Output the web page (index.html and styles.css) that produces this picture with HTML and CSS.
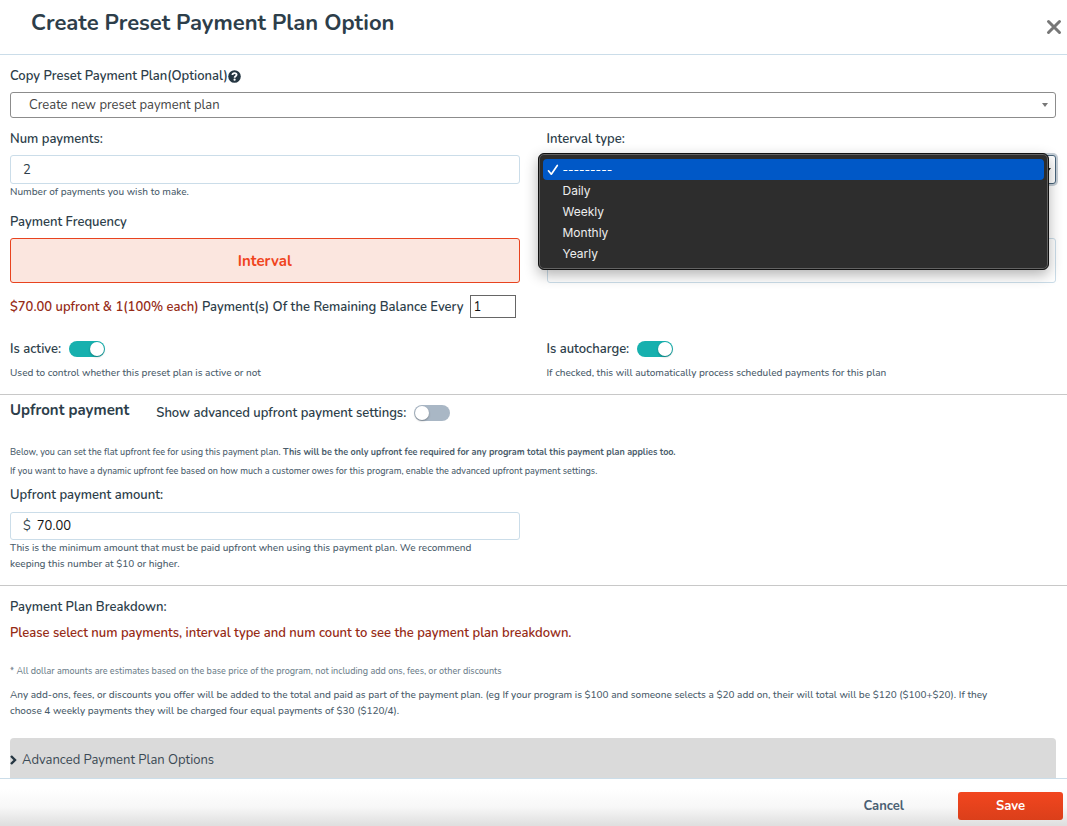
FILE: index.html
```html
<!DOCTYPE html>
<html lang="en">
<head>
    <meta charset="UTF-8">
    <meta name="viewport" content="width=device-width, initial-scale=1.0">
    <title>Create Preset Payment Plan Option</title>
    <link rel="stylesheet" href="styles.css">
</head>
<body>
    <form class="modal">
        <header class="modal-header">
            <h1>Create Preset Payment Plan Option</h1>
            <button type="button" class="close-button" aria-label="Close">
                <svg width="16" height="16" viewBox="0 0 16 16"><path d="M2.500 2.500L13.500 13.500M13.500 2.500L2.500 13.500" stroke="#777" stroke-width="3" stroke-linecap="round"/></svg>
            </button>
        </header>

        <div class="modal-body">
            <!-- Plan setup -->
            <section class="section">
                <div class="label-row">
                    <label for="copyPlan">Copy Preset Payment Plan(Optional)</label>
                    <svg class="help-icon" width="13" height="13" viewBox="0 0 13 13">
                        <circle cx="6.500" cy="6.500" r="6.300" fill="#253642"/>
                        <path d="M4.400 5C4.500 3.700 5.400 3.100 6.500 3.100C7.700 3.100 8.600 3.800 8.600 4.800C8.600 6.200 6.600 6.200 6.600 7.700" fill="none" stroke="#fff" stroke-width="1.800"/>
                        <circle cx="6.600" cy="9.700" r="1.100" fill="#fff"/>
                    </svg>
                </div>
                <select id="copyPlan" class="copy-select">
                    <option>Create new preset payment plan</option>
                </select>

                <div class="columns">
                    <div class="field">
                        <label for="numPayments">Num payments:</label>
                        <input type="text" id="numPayments" class="text-input" value="2">
                        <p class="help">Number of payments you wish to make.</p>
                    </div>
                    <div class="field">
                        <label for="intervalType">Interval type:</label>
                        <div class="interval">
                            <select id="intervalType" class="interval-select">
                                <option>---------</option>
                                <option>Daily</option>
                                <option>Weekly</option>
                                <option>Monthly</option>
                                <option>Yearly</option>
                            </select>
                            <ul class="menu" role="listbox" aria-label="Interval type">
                                <li class="menu-item selected" role="option" aria-selected="true">
                                    <svg class="check" width="12" height="12" viewBox="0 0 12 12"><path d="M1.500 6.800L4.300 10.200L10.300 1.500" fill="none" stroke="#fff" stroke-width="1.700" stroke-linecap="round" stroke-linejoin="round"/></svg>
                                    ---------
                                </li>
                                <li class="menu-item" role="option">Daily</li>
                                <li class="menu-item" role="option">Weekly</li>
                                <li class="menu-item" role="option">Monthly</li>
                                <li class="menu-item" role="option">Yearly</li>
                            </ul>
                        </div>
                    </div>
                </div>

                <div class="columns frequency">
                    <div class="field">
                        <span class="label">Payment Frequency</span>
                        <button type="button" class="frequency-button active">Interval</button>
                    </div>
                    <div class="field field-end">
                        <button type="button" class="frequency-button" aria-label="Other frequency"></button>
                    </div>
                </div>

                <div class="every-row">
                    <label for="every"><span class="red">$70.00 upfront &amp; 1(100% each)</span> Payment(s) Of the Remaining Balance Every</label>
                    <input type="text" id="every" class="every-input" value="1">
                </div>

                <div class="columns toggles">
                    <div>
                        <div class="toggle-row">
                            <label for="isActive">Is active:</label>
                            <input type="checkbox" id="isActive" class="toggle" checked>
                        </div>
                        <p class="help">Used to control whether this preset plan is active or not</p>
                    </div>
                    <div>
                        <div class="toggle-row">
                            <label for="isAutocharge">Is autocharge:</label>
                            <input type="checkbox" id="isAutocharge" class="toggle" checked>
                        </div>
                        <p class="help">If checked, this will automatically process scheduled payments for this plan</p>
                    </div>
                </div>
            </section>

            <!-- Upfront payment -->
            <section class="section upfront">
                <div class="upfront-header">
                    <h2>Upfront payment</h2>
                    <div class="toggle-row">
                        <label for="advancedUpfront">Show advanced upfront payment settings:</label>
                        <input type="checkbox" id="advancedUpfront" class="toggle">
                    </div>
                </div>
                <p class="note">Below, you can set the flat upfront fee for using this payment plan. <strong>This will be the only upfront fee required for any program total this payment plan applies too.</strong></p>
                <p class="note">If you want to have a dynamic upfront fee based on how much a customer owes for this program, enable the advanced upfront payment settings.</p>
                <div class="columns amount">
                    <div class="field">
                        <label for="upfrontAmount">Upfront payment amount:</label>
                        <div class="money-input">
                            <span>$</span>
                            <input type="text" id="upfrontAmount" value="70.00">
                        </div>
                        <p class="help">This is the minimum amount that must be paid upfront when using this payment plan. We recommend keeping this number at $10 or higher.</p>
                    </div>
                </div>
            </section>

            <!-- Breakdown -->
            <section class="section breakdown">
                <p class="label">Payment Plan Breakdown:</p>
                <p class="label red warning">Please select num payments, interval type and num count to see the payment plan breakdown.</p>
                <p class="note estimate">* All dollar amounts are estimates based on the base price of the program, not including add ons, fees, or other discounts</p>
                <p class="help">Any add-ons, fees, or discounts you offer will be added to the total and paid as part of the payment plan. (eg If your program is $100 and someone selects a $20 add on, their will total will be $120 ($100+$20). If they choose 4 weekly payments they will be charged four equal payments of $30 ($120/4).</p>
                <button type="button" class="advanced-button">
                    <svg width="7" height="10" viewBox="0 0 7 10"><path d="M1 1L5 5L1 9" fill="none" stroke="#253642" stroke-width="2.400"/></svg>
                    Advanced Payment Plan Options
                </button>
            </section>
        </div>

        <footer class="modal-footer">
            <button type="button" class="cancel-button">Cancel</button>
            <button type="submit" class="save-button">Save</button>
        </footer>
    </form>
</body>
</html>
```

FILE: styles.css
```css
* {
    box-sizing: border-box;
}
body {
    margin: 0;
    background: #fff;
    color: #2d3e4a;
    font-family: Nunito, "Noto Sans", sans-serif;
    font-size: 13px;
    line-height: 20px;
}
h1, h2, p, ul {
    margin: 0;
    padding: 0;
}
input, select, button {
    font-family: inherit;
    font-size: 13px;
    margin: 0;
}
button {
    cursor: pointer;
}
.modal {
    display: flex;
    flex-direction: column;
    height: 100vh;
}
/* Header */
.modal-header {
    display: flex;
    justify-content: space-between;
    align-items: flex-start;
    padding: 8px 5px 16px 31px;
    border-bottom: 1px solid #cbdde9;
}
.modal-header h1 {
    font-size: 22px;
    font-weight: 700;
    line-height: 30px;
}
.close-button {
    display: flex;
    padding: 0;
    margin-top: 11px;
    border: none;
    background: none;
}
/* Scrolling content */
.modal-body {
    flex: 1;
    min-height: 0;
    overflow-y: auto;
    scrollbar-width: none;
}
.section {
    padding: 11px 11px 13px 10px;
    border-bottom: 1px solid #c8c8c8;
}
label, .label {
    display: block;
    font-weight: 600;
}
.red {
    color: #962b16;
}
.help {
    font-size: 10px;
    font-weight: 500;
    line-height: 16px;
    color: #4a5c6b;
}
.note {
    font-size: 9px;
    font-weight: 500;
    line-height: 16px;
    color: #4a5c6b;
}
.columns {
    display: grid;
    grid-template-columns: 1fr 1fr;
    column-gap: 27px;
}
.field label, .field .label {
    margin-bottom: 6px;
}
.label-row {
    display: flex;
    align-items: center;
    margin-bottom: 6px;
}
.copy-select {
    display: block;
    width: 100%;
    height: 26px;
    margin-bottom: 11px;
    padding: 0 18px;
    border: 1px solid #8c8c8c;
    border-radius: 3px;
    color: #444;
    appearance: none;
    background: #fff url("data:image/svg+xml,%3Csvg xmlns='http://www.w3.org/2000/svg' width='6' height='4'%3E%3Cpath d='M0 0h6L3 4z' fill='%23777'/%3E%3C/svg%3E") no-repeat right 7px center;
}
.text-input {
    display: block;
    width: 100%;
    height: 29px;
    padding: 0 12px;
    border: 1px solid #cbdde9;
    border-radius: 3px;
    color: #2d3e4a;
}
/* Interval dropdown */
.interval {
    position: relative;
}
.interval-select {
    display: block;
    width: 100%;
    height: 29px;
    padding: 0 12px;
    border: 1px solid #48647a;
    border-radius: 3px;
    box-shadow: 0 0 0 2px #c5ced6;
    appearance: none;
    background: #fff url("data:image/svg+xml,%3Csvg xmlns='http://www.w3.org/2000/svg' width='6' height='4'%3E%3Cpath d='M0 0h6L3 4z' fill='%23222'/%3E%3C/svg%3E") no-repeat right 4px center;
}
.menu {
    position: absolute;
    z-index: 1;
    top: -2px;
    left: -9px;
    right: 7px;
    padding: 5px 4px;
    list-style: none;
    background: #2d2d2d;
    border: 1px solid #111;
    border-radius: 6px;
    box-shadow: inset 0 0 0 1px #636363, 0 5px 14px rgba(0, 0, 0, 0.3);
    color: #eee;
    font-family: Inter, "Liberation Sans", sans-serif;
    font-size: 12px;
}
.menu-item {
    position: relative;
    padding-left: 20px;
    line-height: 21px;
    border-radius: 4px;
}
.menu-item.selected {
    background: #0058c7;
    color: #fff;
}
.check {
    position: absolute;
    left: 4px;
    top: 5px;
}
/* Payment frequency */
.frequency {
    margin-top: 12px;
}
.field-end {
    display: flex;
    align-items: flex-end;
}
.frequency-button {
    display: block;
    width: 100%;
    height: 45px;
    border: 1px solid #cbdde9;
    border-radius: 3px;
    background: #fff;
}
.frequency-button.active {
    border-color: #e8431f;
    background: #fbe6df;
    color: #f0441d;
    font-size: 15px;
    font-weight: 700;
}
.every-row {
    display: flex;
    align-items: center;
    gap: 6px;
    margin-top: 12px;
}
.every-input {
    width: 46px;
    height: 23px;
    padding: 0 3px;
    border: 1px solid #666;
    color: #111;
}
/* Toggle switches */
.toggles {
    margin-top: 21px;
}
.toggle-row {
    display: flex;
    align-items: center;
    gap: 8px;
}
.toggles .help {
    margin-top: 6px;
}
.toggle {
    display: flex;
    appearance: none;
    width: 36px;
    height: 16px;
    padding: 1px;
    border-radius: 8px;
    background: #a9b7c5;
    cursor: pointer;
}
.toggle::before {
    content: "";
    width: 14px;
    height: 14px;
    border-radius: 50%;
    background: #fff;
    box-shadow: 0 1px 2px rgba(0, 0, 0, 0.3);
}
.toggle:checked {
    justify-content: flex-end;
    background: #17b0ae;
}
/* Upfront payment */
.upfront {
    padding-top: 3px;
}
.upfront-header {
    display: flex;
    align-items: flex-start;
    gap: 27px;
    margin-bottom: 21px;
}
.upfront-header h2 {
    font-size: 15px;
    font-weight: 700;
    line-height: 24px;
}
.upfront-header .toggle-row {
    margin-top: 5px;
}
.note + .note {
    margin-top: 3px;
}
.amount {
    margin-top: 6px;
}
.amount label {
    margin-bottom: 7px;
}
.amount .help {
    padding-right: 20px;
}
.money-input {
    display: flex;
    align-items: center;
    gap: 6px;
    height: 28px;
    padding: 0 12px;
    border: 1px solid #cbdde9;
    border-radius: 3px;
}
.money-input input {
    flex: 1;
    min-width: 0;
    padding: 0;
    border: none;
    color: #111;
}
/* Breakdown */
.breakdown {
    border-bottom: none;
}
.breakdown .help {
    padding-right: 40px;
}
.warning {
    margin-top: 6px;
}
.estimate {
    margin: 20px 0 8px;
    color: #6f7f8c;
}
.advanced-button {
    display: flex;
    align-items: center;
    gap: 5px;
    width: 100%;
    margin-top: 19px;
    padding: 12px 0;
    border: none;
    border-radius: 4px;
    background: #dadada;
    color: #3a4954;
    line-height: 20px;
}
/* Footer */
.modal-footer {
    display: flex;
    justify-content: flex-end;
    align-items: center;
    gap: 40px;
    padding: 13px 4px 6px;
    border-top: 1px solid #cbdde9;
    background: linear-gradient(#fff 20%, #f7f7f7 60%, #dedede);
}
.cancel-button, .save-button {
    height: 28px;
    border: none;
    border-radius: 3px;
    font-weight: 700;
}
.cancel-button {
    padding: 0 14px;
    background: none;
    color: #4a5f72;
}
.save-button {
    width: 105px;
    background: linear-gradient(#f2461f, #db3f1a);
    color: #fff;
}
```
